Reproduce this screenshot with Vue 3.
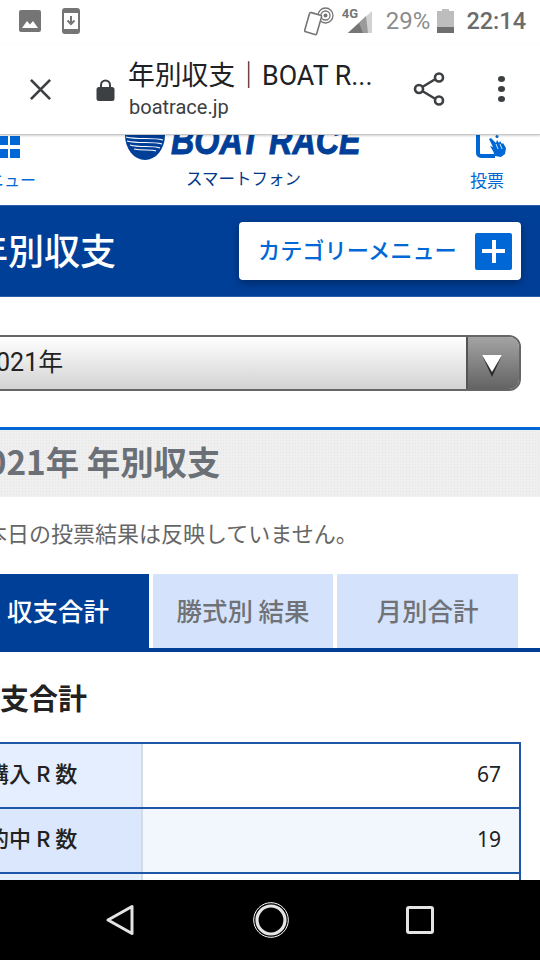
<script setup>
const tabs = [
  { label: '収支合計', active: true },
  { label: '勝式別 結果', active: false },
  { label: '月別合計', active: false }
]
const rows = [
  { label: '購入 R 数', value: '67', cls: 'odd' },
  { label: '的中 R 数', value: '19', cls: 'even' },
  { label: '', value: '', cls: 'odd' }
]
</script>

<template>
  <div class="screen">
    <div class="status">
      <div class="status-left">
        <svg width="22" height="22" viewBox="0 0 22 22"><rect width="22" height="22" rx="2" fill="#757575"/><path d="M3 18l5-7 3 3.500 3-3.500 5 7z" fill="#fff"/></svg>
        <svg width="18" height="26" viewBox="0 0 18 26"><rect x="1" y="1" width="16" height="24" rx="2" fill="none" stroke="#757575" stroke-width="2"/><rect x="1" y="1" width="16" height="4" fill="#757575"/><rect x="1" y="21" width="16" height="4" fill="#757575"/><path d="M9 8v7M5.500 12.500L9 16l3.500-3.500" fill="none" stroke="#757575" stroke-width="2"/></svg>
      </div>
      <div class="status-right">
        <svg class="nfc" width="30" height="30" viewBox="0 0 30 30"><circle cx="21.500" cy="9.500" r="7.500" fill="none" stroke="#757575" stroke-width="1.300"/><circle cx="21.500" cy="9.500" r="4.500" fill="none" stroke="#757575" stroke-width="1.300"/><circle cx="21.500" cy="9.500" r="2" fill="#757575"/><rect x="3" y="7.500" width="12.500" height="20" rx="1.500" transform="rotate(16 9 17)" fill="#fff" stroke="#757575" stroke-width="1.600"/></svg>
        <div class="signal">
          <svg width="30" height="32" viewBox="0 0 30 32"><path d="M6 28L30 6v22z" fill="#d2d2d2"/><path d="M6 28L24 11l2 17z" fill="#9a9a9a"/><path d="M6 28L17 18l4 10z" fill="#757575"/></svg>
          <span class="fourg">4G</span>
        </div>
        <span class="pct">29%</span>
        <svg class="battery" width="17" height="24" viewBox="0 0 17 24"><rect x="5" y="0" width="7" height="3" fill="#bdbdbd"/><rect x="0" y="2" width="17" height="22" fill="#bdbdbd"/><rect x="0" y="18" width="17" height="6" fill="#6f6f6f"/></svg>
        <span class="clock">22:14</span>
      </div>
    </div>

    <div class="toolbar">
      <svg class="close" width="23" height="23" viewBox="0 0 24 24"><path d="M2 2l20 20M22 2L2 22" stroke="#3c4043" stroke-width="2.800" fill="none"/></svg>
      <svg class="lock" width="19" height="24" viewBox="0 0 19 24"><path d="M5 10V7a4.500 4.500 0 0 1 9 0v3" fill="none" stroke="#3c4043" stroke-width="2"/><rect x="0.500" y="9" width="18" height="14" rx="2.500" fill="#3c4043"/></svg>
      <div class="titles">
        <div class="page-title">年別収支｜BOAT R...</div>
        <div class="domain">boatrace.jp</div>
      </div>
      <svg class="share" width="32" height="34" viewBox="0 0 32 34"><path d="M6 17L25 5.500M6 17l19 11.500" stroke="#3c4043" stroke-width="2.600" fill="none"/><circle cx="6" cy="17" r="4" fill="#fff" stroke="#3c4043" stroke-width="2.600"/><circle cx="26" cy="5.500" r="4" fill="#fff" stroke="#3c4043" stroke-width="2.600"/><circle cx="26" cy="28.500" r="4" fill="#fff" stroke="#3c4043" stroke-width="2.600"/></svg>
      <div class="dots"><i></i><i></i><i></i></div>
    </div>

    <main class="page">
      <header class="site-head">
        <div class="head-item menu-item">
          <div class="grid-icon"><i></i><i></i></div>
          <span>ニュー</span>
        </div>
        <div class="brand">
          <div class="logo">
            <svg width="40" height="25" viewBox="0 0 40 25"><path d="M0 0h40a20 25 0 0 1-40 0z" fill="#003f98"/><path d="M1 2c12 3 26 0 37 3M2 6c12 3 24 0 35 3M5 10c11 3 21 0 30 3M9 14c9 2 16 0 22 2" stroke="#fff" stroke-width="1.200" fill="none"/></svg>
            <span class="logo-text">BOAT RACE</span>
          </div>
          <div class="sub">スマートフォン</div>
        </div>
        <div class="head-item vote-item">
          <svg width="32" height="24" viewBox="0 0 32 24"><path d="M2 0v18a3 3 0 0 0 3 3h14" fill="none" stroke="#0068d6" stroke-width="4"/><circle cx="21" cy="1.500" r="1.500" fill="#0068d6"/><path d="M13 4l2-1 5 5 1-3 2 3 1-2 2 3 1-1 3 5-1 6-4 3-6-1-2-5-3-5 3 1z" fill="#0068d6"/><path d="M20 9l2 5M24 9l2 5" stroke="#fff" stroke-width="0.800"/></svg>
          <span>投票</span>
        </div>
      </header>

      <section class="band">
        <h1>年別収支</h1>
        <div class="cat-btn">
          <span>カテゴリーメニュー</span>
          <div class="plus"><i></i><i></i></div>
        </div>
      </section>

      <div class="select">
        <span class="select-text">2021年</span>
        <div class="select-arrow">
          <svg width="24" height="26" viewBox="0 0 24 26"><path d="M2 3l10 22L22 3z" fill="#2a2a2a"/><path d="M2 3h20l-10 17z" fill="#fff"/></svg>
        </div>
      </div>

      <h2 class="section-head">2021年 年別収支</h2>
      <p class="note">本日の投票結果は反映していません。</p>

      <div class="tabs">
        <div v-for="t in tabs" :key="t.label" class="tab" :class="{ active: t.active }">{{ t.label }}</div>
      </div>

      <h3 class="sum-title">収支合計</h3>

      <div class="table">
        <div v-for="(r, i) in rows" :key="i" class="row" :class="r.cls">
          <div class="th">{{ r.label }}</div>
          <div class="td">{{ r.value }}</div>
        </div>
      </div>
    </main>

    <nav class="navbar">
      <svg width="30" height="32" viewBox="0 0 30 32"><path d="M27 2.500v27L3 16z" fill="none" stroke="#e4e4e4" stroke-width="3" stroke-linejoin="round"/></svg>
      <svg width="36" height="36" viewBox="0 0 36 36"><circle cx="18" cy="18" r="17.300" fill="none" stroke="#fff" stroke-width="1"/><circle cx="18" cy="18" r="14" fill="none" stroke="#e4e4e4" stroke-width="3.200"/></svg>
      <svg width="28" height="28" viewBox="0 0 28 28"><rect x="1.500" y="1.500" width="25" height="25" rx="1.500" fill="none" stroke="#e4e4e4" stroke-width="3"/></svg>
    </nav>
  </div>
</template>

<style scoped>
.screen {
  width: 540px;
  height: 960px;
  overflow: hidden;
  display: flex;
  flex-direction: column;
  background: #fff;
  font-family: "Noto Sans CJK JP", "Noto Sans", sans-serif;
}
.status {
  height: 45px;
  flex: none;
  display: flex;
  align-items: center;
  justify-content: space-between;
  padding: 0 14px 4px 19px;
  box-sizing: border-box;
}
.status-left { display: flex; align-items: center; gap: 21px; }
.status-right { display: flex; align-items: center; }
.signal { position: relative; width: 30px; height: 32px; margin-left: 8px; }
.signal svg { position: absolute; left: 0; top: 0; }
.fourg {
  position: absolute;
  left: 0;
  top: 3px;
  font: 700 13px/12px "Roboto", sans-serif;
  color: #757575;
}
.pct {
  margin-left: 14px;
  font: 400 24px/28px "Roboto", sans-serif;
  color: #8c8c8c;
}
.battery { margin-left: 7px; }
.clock {
  margin-left: 12px;
  font: 500 23.500px/28px "Roboto", sans-serif;
  color: #6b6b6b;
}
.toolbar {
  height: 90px;
  flex: none;
  display: flex;
  align-items: center;
  box-sizing: border-box;
  padding-left: 29px;
  border-bottom: 1px solid #c8c8c8;
  box-shadow: 0 1px 2px rgba(0,0,0,.18);
  position: relative;
  z-index: 2;
  background: #fff;
}
.close { margin-right: 44px; margin-top: -1px; }
.lock { margin-right: 13px; margin-top: 1px; }
.titles { width: 270px; margin-top: -2px; }
.page-title {
  font-family: "Roboto", "Noto Sans CJK JP", sans-serif;
  font-size: 26.800px;
  line-height: 34px;
  color: #202124;
  white-space: nowrap;
}
.domain {
  font: 400 20px/24px "Roboto", sans-serif;
  color: #3c4043;
  margin: 2px 0 0 1px;
}
.share { margin-left: 15px; margin-top: -1px; }
.dots { margin-left: 53px; margin-top: -1px; display: flex; flex-direction: column; gap: 4px; }
.dots i { width: 7px; height: 6px; border-radius: 50%; background: #3c4043; display: block; }

.page { flex: 1; min-height: 0; overflow: hidden; position: relative; }
.site-head {
  height: 70px;
  display: flex;
  justify-content: space-between;
  overflow: hidden;
  position: relative;
}
.head-item span { font-size: 16px; line-height: 20px; color: #0068d6; }
.menu-item { width: 36px; height: 56px; position: relative; }
.menu-item span { position: absolute; right: 0; top: 34px; white-space: nowrap; }
.grid-icon { display: flex; flex-direction: column; gap: 4px; width: 20px; margin-top: 1px; }
.grid-icon i { display: block; width: 20px; height: 9px; background: linear-gradient(90deg,#0068d6 0 8px,transparent 8px 10px,#0068d6 10px); }
.brand { width: 240px; margin-left: 6px; position: relative; }
.logo { display: flex; align-items: flex-start; height: 24px; }
.logo svg { margin-left: -2px; flex: none; }
.logo-text {
  margin-top: -16px;
  margin-left: 6px;
  font: italic 700 38px/44px "Liberation Sans", sans-serif;
  color: #003f98;
  white-space: nowrap;
  transform: scaleX(.85);
  transform-origin: left center;
  -webkit-text-stroke: 1px #003f98;
}
.sub {
  margin-top: 7px;
  margin-left: 59px;
  font-size: 16.500px;
  line-height: 24px;
  color: #00378a;
}
.vote-item { width: 70px; margin-right: 18px; display: flex; flex-direction: column; align-items: center; }
.vote-item span { margin-top: 11px; font-size: 17px; line-height: 20px; }
.vote-item svg { margin-left: 10px; }
.band {
  height: 92px;
  box-sizing: border-box;
  background: #003f98;
  border-top: 1px solid #2a5ca8;
  border-bottom: 1px solid #2a5ca8;
  position: relative;
  display: flex;
  align-items: center;
  justify-content: space-between;
  padding-right: 19px;
}
.band h1 {
  margin: 0 0 5px -28px;
  color: #fff;
  font-size: 36px;
  line-height: 44px;
  font-weight: 500;
  white-space: nowrap;
}
.cat-btn {
  width: 282px;
  height: 58px;
  box-sizing: border-box;
  background: #fff;
  border-radius: 4px;
  display: flex;
  align-items: center;
  justify-content: space-between;
  padding: 0 9px 0 19px;
  box-shadow: 0 3px 8px rgba(0,0,0,.35);
}
.cat-btn span { color: #0068d6; font-size: 22.200px; font-weight: 500; white-space: nowrap; padding-bottom: 4px; }
.plus { width: 37px; height: 37px; background: #0068d6; border-radius: 2px; position: relative; }
.plus i { position: absolute; background: #fff; display: block; }
.plus i:first-child { left: 7px; right: 7px; top: 16.500px; height: 4px; }
.plus i:last-child { top: 7px; bottom: 7px; left: 16.500px; width: 4px; }
.select {
  margin: 38px 19px 0 -20px;
  height: 56px;
  box-sizing: border-box;
  border: 2px solid #666;
  border-radius: 12px;
  background: linear-gradient(#fff, #d2d2d2);
  display: flex;
  align-items: stretch;
  overflow: hidden;
}
.select-text { flex: 1; font: 400 25px/52px "Roboto", "Noto Sans CJK JP", sans-serif; color: #222; }
.select-arrow {
  width: 51px;
  border-left: 2px solid #555;
  background: linear-gradient(#a4a4a4, #636363);
  position: relative;
}
.select-arrow svg { position: absolute; left: 12px; top: 15px; }
.section-head {
  margin: 36px 0 0 -33px;
  height: 70px;
  box-sizing: border-box;
  border-top: 3px solid #0068d6;
  background-color: #efefef;
  background-image: radial-gradient(#e4e4e4 1px, transparent 1px);
  background-size: 3px 3px;
  color: #6b7077;
  font-size: 33.400px;
  font-weight: 700;
  line-height: 62px;
  white-space: nowrap;
}
.note {
  margin: 19px 0 0 -15px;
  font-size: 22px;
  line-height: 32px;
  color: #666;
  white-space: nowrap;
}
.tabs {
  margin: 26px 0 0 -33px;
  height: 78px;
  box-sizing: border-box;
  display: flex;
  gap: 4px;
  border-bottom: 4px solid #003f98;
}
.tab {
  width: 181px;
  box-sizing: border-box;
  background: #d4e3fb;
  color: #6f7277;
  font-size: 25.500px;
  font-weight: 500;
  line-height: 72px;
  text-align: center;
  white-space: nowrap;
}
.tab:nth-child(2) { width: 180px; }
.tab.active { width: 182px; background: #003f98; color: #fff; }
.sum-title {
  margin: 25px 0 0 -29px;
  font-size: 29px;
  line-height: 40px;
  font-weight: 700;
  color: #222;
  white-space: nowrap;
}
.table {
  margin: 25px 19px 0 -20px;
  border: 2px solid #1f57a8;
  border-bottom: 0;
}
.row { display: flex; height: 65px; box-sizing: border-box; border-bottom: 2px solid #1f57a8; }
.row .th {
  width: 161px;
  box-sizing: border-box;
  border-right: 2px solid #d5dbe3;
  padding-left: 5px;
  font-size: 22px;
  line-height: 56px;
  font-weight: 500;
  color: #222;
  white-space: nowrap;
}
.row .td {
  flex: 1;
  text-align: right;
  padding-right: 18px;
  font: 400 21px/61px "Noto Sans", sans-serif;
  color: #222;
}
.odd .th { background: #e4eefe; }
.odd .td { background: #fff; }
.even .th { background: #dbe7fc; }
.even .td { background: #f2f7fe; }
.navbar {
  height: 80px;
  flex: none;
  background: #000;
  display: flex;
  align-items: center;
  padding: 0 106px 0 105px;
  justify-content: space-between;
  position: relative;
  z-index: 2;
}
</style>
